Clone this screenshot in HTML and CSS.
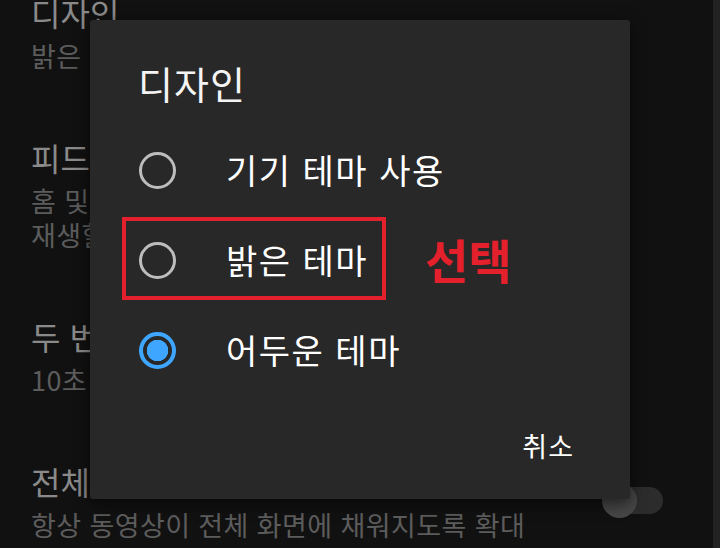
FILE: index.html
```html
<!DOCTYPE html>
<html lang="ko">
<head>
    <meta charset="UTF-8">
    <meta name="viewport" content="width=device-width, initial-scale=1.0">
    <title>디자인</title>
    <link rel="stylesheet" href="styles.css">
</head>
<body>
    <div class="screen">
        <main class="settings">
            <div class="setting">
                <div class="setting-text">
                    <div class="setting-title">디자인</div>
                    <div class="setting-sub">밝은 테마</div>
                </div>
            </div>
            <div class="setting">
                <div class="setting-text">
                    <div class="setting-title">피드에서 음소거 재생</div>
                    <div class="setting-sub">홈 및 구독 피드를 탐색할 때 동영상<br>재생할 때 음소거</div>
                </div>
            </div>
            <div class="setting">
                <div class="setting-text">
                    <div class="setting-title">두 번 탭하여 탐색</div>
                    <div class="setting-sub">10초</div>
                </div>
            </div>
            <div class="setting">
                <div class="setting-text">
                    <div class="setting-title">전체 화면으로 확대</div>
                    <div class="setting-sub">항상 동영상이 전체 화면에 채워지도록 확대</div>
                </div>
                <div class="switch"><span class="switch-thumb"></span></div>
            </div>
        </main>
        <div class="edge"></div>
    </div>

    <div class="dialog">
        <h2 class="dialog-title">디자인</h2>
        <ul class="options">
            <li class="option">
                <span class="radio"></span>
                <span class="option-label">기기 테마 사용</span>
            </li>
            <li class="option">
                <span class="radio"></span>
                <span class="option-label">밝은 테마</span>
                <span class="mark-box"></span>
                <span class="mark-text">선택</span>
            </li>
            <li class="option">
                <span class="radio checked"></span>
                <span class="option-label">어두운 테마</span>
            </li>
        </ul>
        <div class="dialog-actions">
            <button class="btn-text">취소</button>
        </div>
    </div>
</body>
</html>
```

FILE: styles.css
```css
body {
    font-family: "Noto Sans CJK KR", "Noto Sans", sans-serif;
    margin: 0;
    padding: 0;
    background-color: #111;
    height: 548px;
    overflow: hidden;
}
.screen {
    display: flex;
    height: 548px;
}
.settings {
    flex: 1;
    margin-top: -41px;
    padding: 0 50px 0 31px;
}
.setting {
    display: flex;
    align-items: center;
    padding: 31px 0;
}
.setting-text {
    flex: 1;
}
.setting-title {
    font-size: 32px;
    line-height: 44px;
    color: #8a8a8a;
}
.setting-sub {
    margin-top: 5px;
    font-size: 27px;
    line-height: 34px;
    letter-spacing: 0.4px;
    color: #5c5c5c;
}
.switch {
    position: relative;
    width: 56px;
    height: 27px;
    border-radius: 14px;
    background-color: #2c2c2c;
}
.switch-thumb {
    position: absolute;
    left: -5px;
    top: -4px;
    width: 35px;
    height: 35px;
    border-radius: 50%;
    background-color: #464646;
}
.edge {
    width: 7px;
    background-color: #222;
}

.dialog {
    position: absolute;
    left: 90px;
    top: 20px;
    width: 540px;
    height: 479px;
    box-sizing: border-box;
    padding: 42px 0 0 48px;
    background-color: #282828;
    border-radius: 3px;
    box-shadow: 0 4px 16px rgba(0, 0, 0, 0.6);
    color: #fff;
}
.dialog-title {
    margin: 0;
    font-size: 38px;
    line-height: 42px;
    letter-spacing: 1px;
    font-weight: normal;
    color: #f4f4f4;
}
.options {
    list-style: none;
    margin: 21px 0 0 0;
    padding: 0;
}
.option {
    position: relative;
    display: flex;
    align-items: center;
    height: 90px;
}
.radio {
    flex-shrink: 0;
    width: 37px;
    height: 37px;
    box-sizing: border-box;
    border: 3px solid #bdbdbd;
    border-radius: 50%;
    margin-left: 1px;
    margin-right: 50px;
}
.radio.checked {
    border: 4px solid #3ea6ff;
    background: radial-gradient(circle, #3ea6ff 0 10.5px, transparent 11px);
}
.option-label {
    font-size: 34px;
    line-height: 40px;
    letter-spacing: 1.5px;
}
.mark-box {
    position: absolute;
    left: -16px;
    top: 2px;
    width: 264px;
    height: 83px;
    box-sizing: border-box;
    border: 4px solid #e3202b;
}
.mark-text {
    position: absolute;
    left: 287px;
    top: 16px;
    font-size: 47px;
    line-height: 56px;
    font-weight: bold;
    color: #e3202b;
}
.dialog-actions {
    display: flex;
    justify-content: flex-end;
    margin-top: 36px;
    padding-right: 56px;
}
.btn-text {
    font-family: inherit;
    font-size: 27px;
    line-height: 30px;
    letter-spacing: 1px;
    color: #fff;
    background: none;
    border: none;
    padding: 0;
}
```
